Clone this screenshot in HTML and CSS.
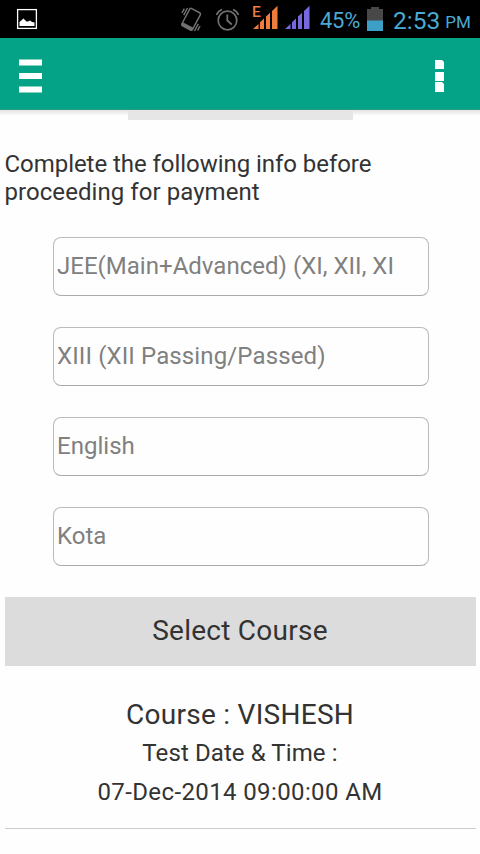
FILE: index.html
```html
<!DOCTYPE html>
<html lang="en">
<head>
<meta charset="utf-8">
<title>Payment info</title>
<link rel="stylesheet" href="styles.css">
</head>
<body>
<header class="status">
  <svg class="status-icons" width="320" height="38" viewBox="0 0 320 38">
    <rect x="17.6" y="9.6" width="18.8" height="18.8" fill="none" stroke="#fff" stroke-width="1.3"/>
    <path d="M19.500 26v-4l4-3.500 3 3h1.500l2-1 2 1.500 2.500.5V26z" fill="#fff"/>
    <g fill="none" stroke="#707070" stroke-width="1.500">
      <g transform="rotate(28 191 19.500)">
        <rect x="185" y="9.500" width="12" height="19.500" rx="1.500"/>
        <path d="M185 27.500h12" stroke-width="3.500"/>
        <path d="M182.500 11v8M180 13v5M199.500 20v8M202 21v5"/>
      </g>
      <circle cx="227.500" cy="20.500" r="9.300" stroke-width="1.700"/>
      <path d="M227.300 14.500v6l4.500 4" stroke-width="1.800"/>
      <path d="M216.500 15q1.500-4 5.500-5.500M233 9.500q4 1.500 5.500 5.500" stroke-width="1.700"/>
    </g>
    <g fill="#ee7c3c">
      <path d="M253 29l5.500-5v5zM260 29v-6.800l4-3.800V29zM266 29V16.600l4-3.800V29zM272 29V11l5.500-5.200V29z"/>
      <text class="network" x="252" y="17">E</text>
    </g>
    <path d="M285 29l5.500-5v5zM292 29v-6.800l4-3.800V29zM298 29V16.600l4-3.800V29zM304 29V11l5.500-5.200V29z" fill="#7768e0"/>
  </svg>
  <span class="percent">45%</span>
  <svg class="battery" width="16" height="24" viewBox="0 0 16 24"><path d="M4 0h8v2h4v22H0V2h4z" fill="#484848"/><path d="M0 13.500h16V24H0z" fill="#3d9fc6"/></svg>
  <span class="time">2:53</span><span class="period">PM</span>
</header>
<nav class="bar">
  <svg width="24" height="34" viewBox="0 0 24 34"><path d="M0 .500h23v6H0zM0 14h23v6H0zM0 27.500h23v6H0z" fill="#fff"/></svg>
  <svg width="10" height="34" viewBox="0 0 10 34"><path d="M1 1h7l2 2v7H1zM1 13h9v9H1zM1 23h7l2 2v8H1z" fill="#fff"/></svg>
</nav>
<main>
  <div class="stub"></div>
  <p class="intro"><span class="lead">Complete the following info before</span><br>proceeding for payment</p>
  <div class="fields">
    <div class="field">JEE(Main+Advanced) (XI, XII, XI</div>
    <div class="field wide">XIII (XII Passing/Passed)</div>
    <div class="field">English</div>
    <div class="field">Kota</div>
  </div>
  <button class="select">Select Course</button>
  <section class="course">
    <h2>Course : VISHESH</h2>
    <p class="label">Test Date &amp; Time :</p>
    <p class="date">07-Dec-2014 09:00:00 AM</p>
  </section>
</main>
</body>
</html>
```

FILE: styles.css
```css
* { box-sizing: border-box; }
body { margin: 0; width: 480px; height: 854px; overflow: hidden; background: #fefefe; color: #333; font-family: Roboto, sans-serif; }
.status { height: 38px; background: #000; color: #4baad3; display: flex; align-items: center; }
.status > * { flex: none; }
.network { font-family: Roboto, sans-serif; font-size: 15.5px; font-weight: 500; }
.percent { width: 47px; padding-top: 3px; font-size: 22px; letter-spacing: -.3px; }
.battery { margin-top: -1px; }
.time { margin-left: 10px; padding-top: 2px; font-size: 24.5px; white-space: nowrap; }
.period { margin-left: 5px; padding-top: 6px; font-size: 17px; }
.bar { height: 72px; background: #04a287; display: flex; justify-content: space-between; align-items: center; padding: 4px 36px 0 19px; border-bottom: 1px solid #2a9c86; }
main { padding: 0 4px 0 5px; background: linear-gradient(#e2e2e2, #fefefe 6px); }
.stub { width: 225px; height: 10px; margin-left: 123px; background: #e6e6e6; }
.intro { margin: 30px 0 31px -.5px; font-size: 24px; line-height: 28px; letter-spacing: .06px; }
.lead { letter-spacing: -.05px; }
.fields { display: grid; gap: 31px; margin-left: 48px; }
.field { width: 376px; height: 59px; border: 1px solid #bbb; border-bottom-color: #aaa; border-radius: 8px; padding-left: 3px; font-size: 24px; line-height: 56px; color: #808080; letter-spacing: .02px; }
.wide { letter-spacing: .12px; }
.select { display: block; width: 471px; height: 69px; margin: 31px 0 0; padding: 0 1px 2px 0; border: 0; background: #dcdcdc; color: #333; font: 28px Roboto, sans-serif; letter-spacing: .25px; }
.course { text-align: center; border-bottom: 1px solid #ccc; margin-top: 29px; height: 134px; padding-right: 1px; }
h2 { margin: 0; font: 28px/39px Roboto, sans-serif; letter-spacing: .28px; }
.course p { margin: 0; font-size: 24px; line-height: 39px; }
.label { letter-spacing: .1px; }
.date { letter-spacing: .38px; }
```
